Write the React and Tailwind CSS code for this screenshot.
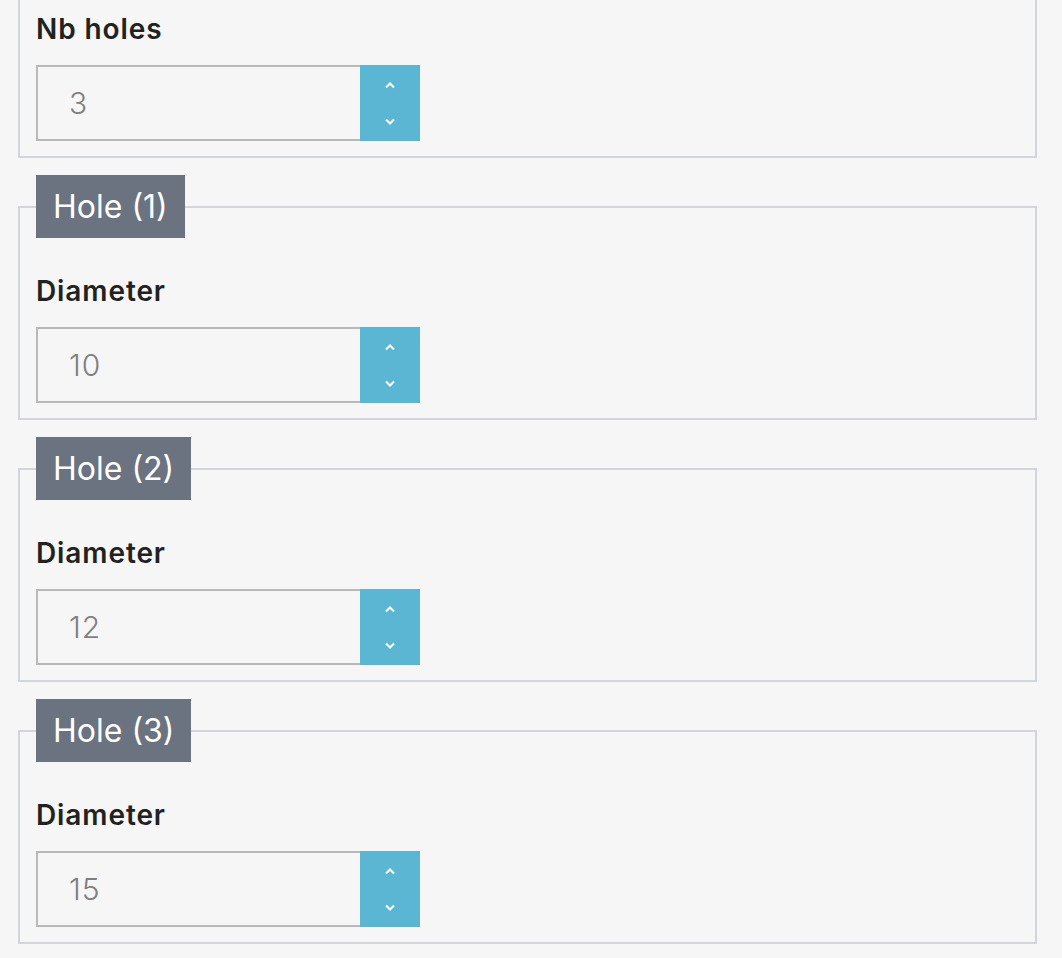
import { useState } from 'react';

function Chevron({ up }) {
  return (
    <svg width="12" height="8" viewBox="0 0 12 8" fill="none" className="block">
      {up ? (
        <polyline points="2,6.5 6,2.5 10,6.5" stroke="white" strokeWidth="2" />
      ) : (
        <polyline points="2,1.5 6,5.5 10,1.5" stroke="white" strokeWidth="2" />
      )}
    </svg>
  );
}

function NumberField({ label, value, onChange }) {
  return (
    <div>
      <label className="block text-[28px] leading-[36px] font-semibold tracking-[0.9px] text-[#222222]">{label}</label>
      <div className="mt-[18px] flex h-[76px] w-[384px]">
        <input
          type="text"
          value={value}
          onChange={e => onChange(e.target.value)}
          className="h-full w-[324px] border-2 border-r-0 border-[#b9b9b9] bg-[#f6f6f6] pl-[31px] text-[30px] font-light tracking-[1px] text-[#7f7f7f] outline-none"
        />
        <div className="flex h-full w-[60px] flex-col items-center justify-between bg-[#5bb6d4] pt-[16px] pb-[15px]">
          <button type="button" onClick={() => onChange(String(Number(value) + 1))}>
            <Chevron up />
          </button>
          <button type="button" onClick={() => onChange(String(Number(value) - 1))}>
            <Chevron />
          </button>
        </div>
      </div>
    </div>
  );
}

export default function App() {
  const [nb, setNb] = useState('3');
  const [holes, setHoles] = useState(['10', '12', '15']);

  const setHole = (i, v) => setHoles(h => h.map((x, j) => (j === i ? v : x)));

  return (
    <div className="min-h-screen overflow-hidden bg-[#f6f6f6] pl-[18px] pr-[25px] font-['Inter',sans-serif]">
      <div className="flex flex-col gap-[17px]">
        <fieldset className="-mt-[20px] border-2 border-[#d2d6dc] px-4 pt-[29px] pb-[15px]">
          <NumberField label="Nb holes" value={nb} onChange={setNb} />
        </fieldset>
        {holes.map((d, i) => (
          <fieldset key={i} className="border-2 border-[#d2d6dc] px-4 pb-[15px]">
            <legend className="h-[63px] bg-[#6b7280] px-[17px] text-[32px] leading-[63px] text-white">
              Hole ({i + 1})
            </legend>
            <div className="mt-[35px]">
              <NumberField label="Diameter" value={d} onChange={v => setHole(i, v)} />
            </div>
          </fieldset>
        ))}
      </div>
    </div>
  );
}
